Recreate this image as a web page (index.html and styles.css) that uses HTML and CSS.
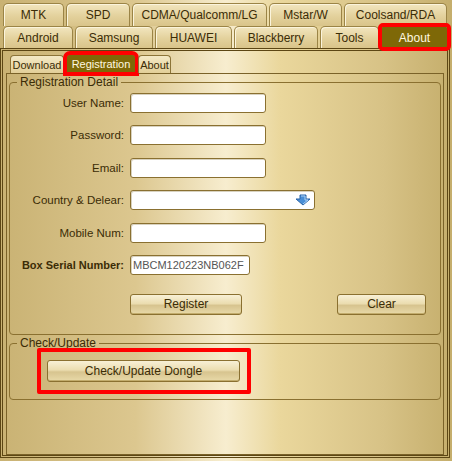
FILE: index.html
```html
<!DOCTYPE html>
<html lang="en">
<head>
    <meta charset="UTF-8">
    <title>Registration</title>
    <link rel="stylesheet" href="styles.css">
</head>
<body>
    <div class="app">
        <div class="tabs tabs-top">
            <div class="tab" style="width:61px">MTK</div>
            <div class="tab" style="width:64px">SPD</div>
            <div class="tab" style="width:135px">CDMA/Qualcomm/LG</div>
            <div class="tab" style="width:73px">Mstar/W</div>
            <div class="tab" style="width:103px">Coolsand/RDA</div>
        </div>
        <div class="tabs tabs-second">
            <div class="tab" style="width:70px">Android</div>
            <div class="tab" style="width:78px">Samsung</div>
            <div class="tab" style="width:77px">HUAWEI</div>
            <div class="tab" style="width:84px">Blackberry</div>
            <div class="tab" style="width:59px">Tools</div>
            <div class="tab active marked" style="width:67px">About</div>
        </div>

        <div class="panel">
            <div class="subtabs">
                <div class="subtab" style="width:54px">Download</div>
                <div class="subtab active marked" style="width:70px">Registration</div>
                <div class="subtab" style="width:33px">About</div>
            </div>
            <div class="page">
                <fieldset class="group detail">
                    <legend>Registration Detail</legend>
                    <div class="row">
                        <label>User Name:</label>
                        <input type="text" class="field">
                    </div>
                    <div class="row">
                        <label>Password:</label>
                        <input type="password" class="field">
                    </div>
                    <div class="row">
                        <label>Email:</label>
                        <input type="text" class="field">
                    </div>
                    <div class="row">
                        <label>Country &amp; Delear:</label>
                        <div class="field combo">
                            <svg class="arrow" width="16" height="12" viewBox="0 0 16 12">
                                <path d="M5 1h6v4h4l-7 6-7-6h4z" fill="#4a8fd6" stroke="#2a64a8" stroke-width="1"/>
                                <path d="M6 2h4v4h3l-5 4" fill="none" stroke="#a9d0f5" stroke-width="1"/>
                            </svg>
                        </div>
                    </div>
                    <div class="row">
                        <label>Mobile Num:</label>
                        <input type="text" class="field">
                    </div>
                    <div class="row">
                        <label class="strong">Box Serial Number:</label>
                        <input type="text" class="field serial" value="MBCM120223NB062F">
                    </div>
                    <div class="actions">
                        <button class="btn register">Register</button>
                        <button class="btn clear">Clear</button>
                    </div>
                </fieldset>

                <fieldset class="group check">
                    <legend>Check/Update</legend>
                    <div class="highlight">
                        <button class="btn dongle">Check/Update Dongle</button>
                    </div>
                </fieldset>
            </div>
        </div>
    </div>
</body>
</html>
```

FILE: styles.css
```css
body {
    margin: 0;
    padding: 0;
    font-family: "Liberation Sans", Arial, sans-serif;
    font-size: 11px;
    color: #3b2c06;
    background: #d4c187;
}

.app {
    width: 452px;
    height: 461px;
    overflow: hidden;
    background: linear-gradient(to right, #c9b273 0%, #dcc78f 30%, #f7edcf 50%, #ead79c 62%, #d7c286 85%, #c5ae6c 100%);
}

.tabs {
    display: flex;
    gap: 2px;
    padding-left: 3px;
}

.tabs-top {
    padding-top: 3px;
    height: 23px;
}

.tabs-second {
    height: 22px;
}

.tab {
    box-sizing: border-box;
    display: flex;
    align-items: center;
    justify-content: center;
    font-size: 12px;
    color: #3b2c06;
    border: 1px solid #9b8446;
    border-bottom: none;
    border-radius: 5px 5px 0 0;
    background: linear-gradient(to bottom, #f2e6bf 0%, #e3d19c 55%, #d9c48a 100%);
    box-shadow: inset 1px 1px 0 #fbf4dc;
}

.tab.active {
    background: #7e6807;
    color: #fff8e0;
    box-shadow: none;
}

.marked {
    outline: 4px solid #ff0000;
    outline-offset: -1px;
    border-radius: 2px;
}

.panel {
    box-sizing: border-box;
    height: 410px;
    margin: 0 2px 0 0;
    border: 3px double #5c4614;
    padding: 2px 3px 0 3px;
}

.subtabs {
    display: flex;
    gap: 2px;
    padding-left: 4px;
    height: 20px;
    align-items: flex-end;
}

.subtab {
    box-sizing: border-box;
    height: 18px;
    display: flex;
    align-items: center;
    justify-content: center;
    font-size: 11px;
    border: 1px solid #8c7438;
    border-bottom: none;
    border-radius: 4px 4px 0 0;
    background: linear-gradient(to bottom, #f4e9c6, #e2cf98);
}

.subtab.active {
    background: #7e6807;
    color: #fff8e0;
    height: 19px;
}

.page {
    box-sizing: border-box;
    height: 382px;
    border: 1px solid #7a6228;
    padding: 1px 2px 0 2px;
}

.group {
    margin: 0;
    border: 1px solid #8a7030;
    border-radius: 4px;
    padding: 0;
}

.group legend {
    margin-left: 7px;
    padding: 0 3px;
    font-size: 12px;
    color: #3b2c06;
}

.detail {
    height: 260px;
    box-sizing: border-box;
    padding-top: 4px;
}

.row {
    display: flex;
    align-items: center;
    height: 20px;
    margin-bottom: 12.4px;
}

.row label {
    width: 114px;
    text-align: right;
    font-size: 11.5px;
    margin-right: 6px;
    white-space: nowrap;
}

.row label.strong {
    font-weight: bold;
    font-size: 11px;
}

.field {
    box-sizing: border-box;
    width: 136px;
    height: 20px;
    border: 1px solid #8a7030;
    border-radius: 3px;
    box-shadow: inset 1px 1px 0 #d8d2c0;
    background: #ffffff;
    font-family: "Liberation Sans", Arial, sans-serif;
    font-size: 11px;
    color: #555555;
    padding: 0 2px;
    margin: 0;
}

.combo {
    width: 185px;
    display: flex;
    align-items: center;
    justify-content: flex-end;
    padding-right: 3px;
}

.serial {
    width: 120px;
}

.actions {
    display: flex;
    padding-left: 120px;
    margin-top: 19px;
}

.btn {
    box-sizing: border-box;
    height: 21px;
    border: 1px solid #8a7030;
    border-radius: 3px;
    background: linear-gradient(to bottom, #f8f0d6 0%, #ebddb0 45%, #d7c48f 55%, #e8d9a8 100%);
    box-shadow: inset 0 -1px 0 #c2ac6c;
    font-family: "Liberation Sans", Arial, sans-serif;
    font-size: 12px;
    color: #3b2c06;
    padding: 0;
}

.register {
    width: 112px;
}

.clear {
    width: 89px;
    margin-left: 95px;
}

.check {
    height: 64px;
    box-sizing: border-box;
    margin-top: 1px;
}

.highlight {
    display: inline-block;
    margin: -2px 0 0 27px;
    padding: 8px 7px 8px 6px;
    border: 4px solid #ff0000;
    border-radius: 2px;
    line-height: 0;
}

.dongle {
    width: 193px;
    height: 22px;
}
```
